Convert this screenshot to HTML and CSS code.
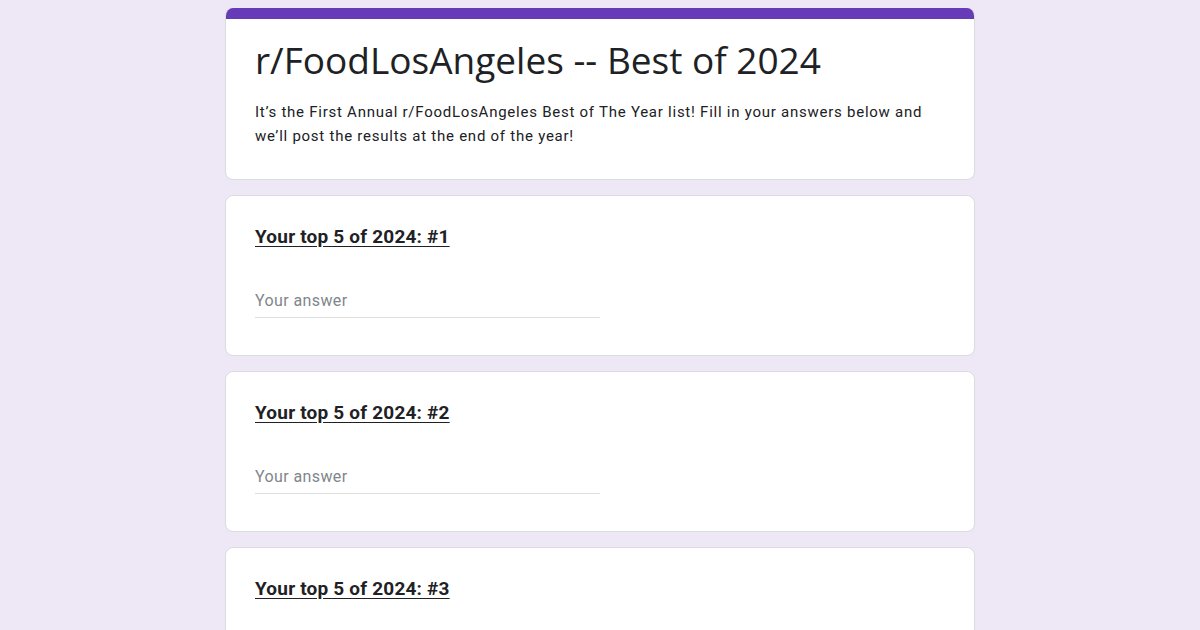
FILE: index.html
```html
<!DOCTYPE html>
<html>
<head>
<meta charset="utf-8">
<link rel="stylesheet" href="styles.css">
</head>
<body>
<div class="form">
  <div class="card header-card">
    <div class="bar"></div>
    <div class="header-body">
      <h1 class="title">r/FoodLosAngeles -- Best of 2024</h1>
      <p class="desc">It’s the First Annual r/FoodLosAngeles Best of The Year list! Fill in your answers below and we’ll post the results at the end of the year!</p>
    </div>
  </div>
  <div class="card q-card">
    <div class="q-title">Your top 5 of 2024: #1</div>
    <div class="answer">Your answer</div>
  </div>
  <div class="card q-card">
    <div class="q-title">Your top 5 of 2024: #2</div>
    <div class="answer">Your answer</div>
  </div>
  <div class="card q-card">
    <div class="q-title">Your top 5 of 2024: #3</div>
  </div>
</div>
</body>
</html>
```
FILE: styles.css
```css
html, body {
  margin: 0;
  padding: 0;
  background: #ede7f6;
  height: 630px;
  overflow: hidden;
}
body {
  font-family: Roboto, "Liberation Sans", sans-serif;
  color: #202124;
}
.form {
  width: 750px;
  margin: 0 auto;
  padding-top: 8px;
  display: flex;
  flex-direction: column;
  gap: 15px;
}
.card {
  background: #fff;
  border: 1px solid #dadce0;
  border-radius: 8px;
  box-sizing: border-box;
}
.header-card {
  height: 172px;
  border-top: none;
  overflow: hidden;
}
.bar {
  height: 11px;
  background: #673ab7;
}
.header-body {
  padding: 17px 29px 0;
}
.title {
  margin: 0;
  font-family: "Open Sans", Roboto, sans-serif;
  font-weight: 400;
  font-size: 37px;
  line-height: 48px;
  letter-spacing: 0;
  color: #202124;
}
.desc {
  margin: 16px 0 0;
  font-size: 15px;
  line-height: 24px;
  letter-spacing: 0.75px;
  color: #202124;
}
.q-card {
  height: 161px;
  padding: 29px 29px 0;
}
.q-title {
  font-size: 19px;
  font-weight: 700;
  line-height: 24px;
  text-decoration: underline;
  text-underline-offset: 3px;
  letter-spacing: 0.2px;
}
.answer {
  margin-top: 40px;
  width: 345px;
  font-size: 16px;
  line-height: 24px;
  letter-spacing: 0.4px;
  color: #80868b;
  padding-bottom: 4px;
  border-bottom: 1px solid #e0e0e0;
}
```
